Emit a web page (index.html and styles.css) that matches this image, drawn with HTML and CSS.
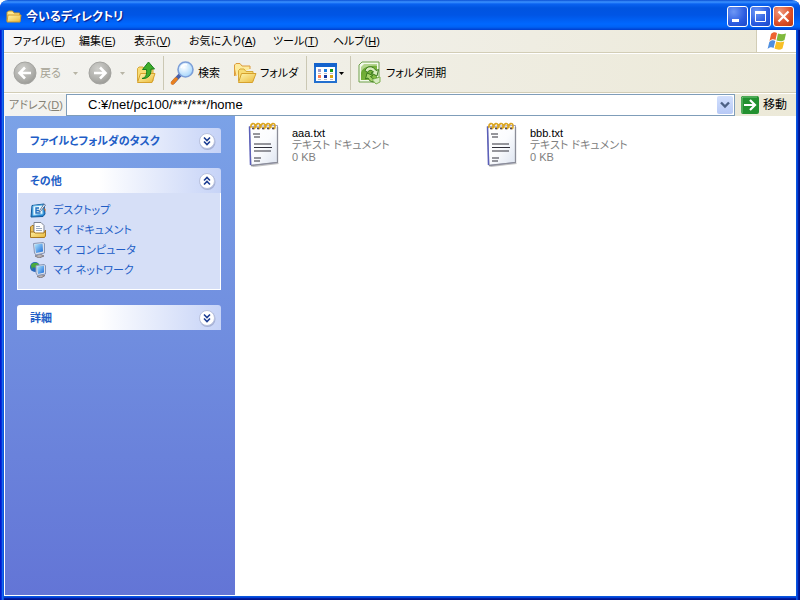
FILE: index.html
```html
<!DOCTYPE html>
<html lang="ja">
<head>
<meta charset="utf-8">
<title>今いるディレクトリ</title>
<link rel="stylesheet" href="styles.css">
</head>
<body>
<svg class="defs" width="0" height="0" aria-hidden="true">
  <defs>
    <linearGradient id="gold" x1="0" y1="0" x2="1" y2="1"><stop offset="0" stop-color="#fff6b0"/><stop offset="1" stop-color="#eab93a"/></linearGradient>
    <radialGradient id="gray" cx=".4" cy=".3" r=".8"><stop offset="0" stop-color="#cfcfcb"/><stop offset=".6" stop-color="#b0b0ac"/><stop offset="1" stop-color="#94948f"/></radialGradient>
    <radialGradient id="lens" cx=".4" cy=".35" r=".7"><stop offset="0" stop-color="#ffffff"/><stop offset="1" stop-color="#9fd3fb"/></radialGradient>
    <linearGradient id="paper" x1="0" y1="0" x2="1" y2="1"><stop offset="0" stop-color="#ffffff"/><stop offset=".5" stop-color="#fbfcfe"/><stop offset="1" stop-color="#dde4f0"/></linearGradient>
    <linearGradient id="screen" x1="0" y1="0" x2="1" y2="1"><stop offset="0" stop-color="#b9ecff"/><stop offset="1" stop-color="#1668d8"/></linearGradient>
    <linearGradient id="leaf" x1="0" y1="0" x2="1" y2="1"><stop offset="0" stop-color="#5e9f2a"/><stop offset="1" stop-color="#8fc34c"/></linearGradient>
    <symbol id="disc" viewBox="0 0 18 18">
      <circle cx="9.500" cy="10" r="8" fill="#8791b8" opacity=".55"/>
      <circle cx="9" cy="9" r="7.500" fill="#fff" stroke="#b9c2de"/>
    </symbol>
    <symbol id="expand" viewBox="0 0 18 18">
      <use href="#disc"/>
      <path d="M6 5.500l3 3 3-3M6 9.500l3 3 3-3" fill="none" stroke="#1c3d92" stroke-width="1.600"/>
    </symbol>
    <symbol id="collapse" viewBox="0 0 18 18">
      <use href="#disc"/>
      <path d="M6 8.500l3-3 3 3M6 12.500l3-3 3 3" fill="none" stroke="#1c3d92" stroke-width="1.600"/>
    </symbol>
    <symbol id="notepad" viewBox="0 0 32 46">
      <path d="M3 44l27-3 1 1-26 3z" fill="#9a9a9a" opacity=".6"/>
      <path d="M1.500 4.500L29.500 3.500v37L3 43.500z" fill="url(#paper)" stroke="#9a9cc0"/>
      <path d="M1.500 4.500L2.500 43" stroke="#5b5fb8" stroke-width="1.500"/>
      <path d="M29.500 5v35.500L3 43.500" stroke="#8b8d98" fill="none" stroke-width="1.300"/>
      <path d="M5 12h7M6 15h6M6 22h17M6 25.500h18M6 29h17M6 36h7M6 39h6" stroke="#30303a" stroke-width="1.200"/>
      <path d="M3 6c-1-5 4-6 4-2s-2 3-2 1M8 6c-1-5 4-6 4-2s-2 3-2 1M13 6c-1-5 4-6 4-2s-2 3-2 1M18 6c-1-5 4-6 4-2s-2 3-2 1M23 6c-1-5 4-6 4-2s-2 3-2 1" fill="none" stroke="#dba520" stroke-width="1.600"/>
      <path d="M4 6.500h2M9 6.500h2M14 6.500h2M19 6.500h2M24 6.500h2" stroke="#504a62" stroke-width="1.500"/>
    </symbol>
  </defs>
</svg>
<div class="window">
  <header class="titlebar">
    <svg class="title-icon" width="16" height="16" viewBox="0 0 16 16"><path d="M1 12V3.500l1.500-1.500h4l1.500 2h5.500v3" fill="#ffe98e" stroke="#c89a2c"/><path d="M1 13l1-7h13l-1 7z" fill="url(#gold)" stroke="#d0992a"/></svg>
    <h1 class="title">今いるディレクトリ</h1>
    <div class="controls">
      <button class="control" type="button" aria-label="最小化"><svg width="19" height="19" viewBox="0 0 19 19"><path d="M4 12h7v3H4z" fill="#fff"/></svg></button>
      <button class="control" type="button" aria-label="最大化"><svg width="19" height="19" viewBox="0 0 19 19"><path d="M4.500 4.500h10v10h-10z" fill="none" stroke="#fff"/><path d="M4 4h11v3H4z" fill="#fff"/></svg></button>
      <button class="control close" type="button" aria-label="閉じる"><svg width="19" height="19" viewBox="0 0 19 19"><path d="M4.500 4.500l10 10M14.500 4.500l-10 10" stroke="#fff" stroke-width="2.200"/></svg></button>
    </div>
  </header>
  <div class="menubar">
    <nav class="menu">
      <button type="button">ファイル(<u>F</u>)</button>
      <button type="button">編集(<u>E</u>)</button>
      <button type="button">表示(<u>V</u>)</button>
      <button type="button">お気に入り(<u>A</u>)</button>
      <button type="button">ツール(<u>T</u>)</button>
      <button type="button">ヘルプ(<u>H</u>)</button>
    </nav>
    <div class="flag">
      <svg width="20" height="20" viewBox="0 0 20 20"><path d="M4 3c2-2 4-2 6-1L8.500 9c-2-1-4-1-6 1z" fill="#ee6331"/><path d="M11 2.500c3 1 5 1 8 0L17.500 9c-3 2-5 1-8 .5z" fill="#7fb93d"/><path d="M2.300 11c2-2 4-2 6-1l-1.700 7c-2-1-4-1-6 1z" fill="#4f8fe0"/><path d="M9.300 10.500c3 1 5 1 8 0l-1.800 7c-3 2-5 1-8 0z" fill="#f8bf26"/></svg>
    </div>
  </div>
  <div class="toolbar">
    <button class="tool back" type="button" disabled>
      <svg width="24" height="24" viewBox="0 0 24 24"><circle cx="12" cy="12" r="11" fill="url(#gray)" stroke="#a4a4a0"/><path d="M18 12H7M12 6.500L6.500 12l5.500 5.500" fill="none" stroke="#fff" stroke-width="2.600"/></svg>
      <span>戻る</span>
      <svg class="drop" width="5" height="3" viewBox="0 0 5 3"><path d="M0 0h5L2.500 3z" fill="#b8b5a6"/></svg>
    </button>
    <button class="tool forward" type="button" disabled aria-label="進む">
      <svg width="24" height="24" viewBox="0 0 24 24"><circle cx="12" cy="12" r="11" fill="url(#gray)" stroke="#a4a4a0"/><path d="M6 12h11M12 6.500l5.500 5.500-5.500 5.500" fill="none" stroke="#fff" stroke-width="2.600"/></svg>
      <svg class="drop" width="5" height="3" viewBox="0 0 5 3"><path d="M0 0h5L2.500 3z" fill="#b8b5a6"/></svg>
    </button>
    <button class="tool up" type="button" aria-label="上へ">
      <svg width="20" height="24" viewBox="0 0 20 24"><path d="M1.500 20V7.500L3 6h4l2 2.500h8V20z" fill="#f8dc74" stroke="#d6a93a"/><path d="M1.500 21.500l3-9H19l-3 9z" fill="url(#gold)" stroke="#d6a12c"/><path d="M6 17.500c4-1 5-4 4.500-9H6.500L12.500 1l6 7H15c.5 6-3 10-9 9.500z" fill="#3fae2b" stroke="#197f1d"/></svg>
    </button>
    <button class="tool search" type="button">
      <svg width="24" height="24" viewBox="0 0 24 24"><path d="M10 14l-7 7.500" stroke="#4a5fa8" stroke-width="4" stroke-linecap="round"/><path d="M6 18l-3.500 4" stroke="#e8801f" stroke-width="3.500" stroke-linecap="round"/><circle cx="15.500" cy="8.500" r="7.500" fill="url(#lens)" stroke="#7d9fd8" stroke-width="1.600"/><path d="M11 7c1-3 4-4 6-3" fill="none" stroke="#fff" stroke-width="1.500"/></svg>
      <span>検索</span>
    </button>
    <button class="tool folders" type="button">
      <svg width="24" height="24" viewBox="0 0 24 24"><path d="M1.500 15V4L3 2.500h4l2 2.500h8v3" fill="#fdeb9d" stroke="#dc9b3c"/><path d="M3 15L1.500 8" stroke="#e0a03c"/><path d="M5.500 20V9.500L7 8h4l2 2.500h7V20z" fill="#f8dc74" stroke="#d6a93a"/><path d="M5.500 21.500l3-9H23l-3.500 9z" fill="url(#gold)" stroke="#d6a12c"/></svg>
      <span>フォルダ</span>
    </button>
    <button class="tool views" type="button" aria-label="表示">
      <svg width="23" height="20" viewBox="0 0 23 20"><path d="M1 1h21v18H1z" fill="#fff" stroke="#2370cf" stroke-width="2"/><path d="M0 0h23v4H0z" fill="#1463cd"/><path d="M4 6h3v3H4z" fill="#9b98c8"/><path d="M10 6h3v3h-3z" fill="#1d7fe0"/><path d="M16 6h3v3h-3z" fill="#159719"/><path d="M4 12h3v3H4z" fill="#ff7b4c"/><path d="M10 12h3v3h-3z" fill="#12349c"/><path d="M16 12h3v3h-3z" fill="#d9a313"/><path d="M4 10.500h3m3 0h3m3 0h3M4 16.500h3m3 0h3m3 0h3" stroke="#b7bac2"/></svg>
      <svg class="drop" width="5" height="3" viewBox="0 0 5 3"><path d="M0 0h5L2.500 3z" fill="#000"/></svg>
    </button>
    <button class="tool sync" type="button">
      <svg width="24" height="24" viewBox="0 0 24 24"><path d="M1 4L4 1h17v20H1z" fill="#f4faec" stroke="#6fa04a"/><path d="M3 6l3-3h13v16H3z" fill="#b4d58e"/><path d="M3 19V12C4 7 10 4 19 5v14z" fill="url(#leaf)"/><path d="M7 9.500c2-5 8-5 11 0l2.500-1L19 15l-6-3 2.500-1c-2-2.500-5-2-6 .5z" fill="#d9edbd" stroke="#39791c"/><path d="M21 18c-3 4-9 4-11-1l-2.500 1L9 12l6 2.500-2.500 1c2 3 5 2.500 6 1z" fill="#a6d36b" stroke="#39791c"/><path d="M14 18.500l8-2.500v5l-4 2z" fill="#d8ecc3" stroke="#7eb251"/></svg>
      <span>フォルダ同期</span>
    </button>
  </div>
  <form class="address">
    <label class="address-label" for="path">アドレス(<u>D</u>)</label>
    <div class="combo">
      <input id="path" type="text" value="C:¥/net/pc100/***/***/home">
      <button class="combo-drop" type="button" aria-label="履歴"><svg width="10" height="8" viewBox="0 0 10 8"><path d="M1 1.500l4 4 4-4" fill="none" stroke="#4d6185" stroke-width="2.400"/></svg></button>
    </div>
    <button class="go" type="button">
      <svg width="18" height="18" viewBox="0 0 18 18"><rect width="18" height="18" rx="2" fill="#239130"/><path d="M1 17V2l1-1h14" fill="none" stroke="#76c47c"/><path d="M3 9h10M9 4l5 5-5 5" fill="none" stroke="#fff" stroke-width="2.200"/></svg>
      <span>移動</span>
    </button>
  </form>
  <div class="body">
    <aside class="sidebar">
      <section class="panel">
        <h2 class="panel-head">ファイルとフォルダのタスク<button type="button" aria-label="展開"><svg width="18" height="18"><use href="#expand"/></svg></button></h2>
      </section>
      <section class="panel">
        <h2 class="panel-head">その他<button type="button" aria-label="折りたたむ"><svg width="18" height="18"><use href="#collapse"/></svg></button></h2>
        <ul class="places">
          <li><a href="#"><svg width="16" height="16" viewBox="0 0 16 16"><path d="M2 3.500L14 2l1 10-2 2.500L1 15z" fill="#2583d2" stroke="#135b9b"/><path d="M3 4l9.500-1 .5 9L3 13.500z" fill="#e8f8ff" stroke="#62b5e6"/><path d="M9 6H6v5h4.500M6 8.500h3" fill="none" stroke="#226fc0" stroke-width="1.400"/><path d="M9 9.500L14 2l1.500 1-5 6.500z" fill="#fff" stroke="#43618e" stroke-width=".8"/><path d="M13.500 6l2 1v3z" fill="#de7225"/></svg>デスクトップ</a></li>
          <li><a href="#"><svg width="16" height="16" viewBox="0 0 16 16"><path d="M.5 14.500V5L2 3.500h2v11z" fill="#eac05a" stroke="#a97921"/><path d="M4 .5h7l3 3V12H4z" fill="#fff" stroke="#7e8494"/><path d="M6 4.500h4M6 6.500h6M6 8.500h6" stroke="#9aaac2"/><path d="M.5 15.500V10h3.500l1 1h9l1.500-3v6l-1 1.500z" fill="url(#gold)" stroke="#a97921"/></svg>マイ ドキュメント</a></li>
          <li><a href="#"><svg width="16" height="16" viewBox="0 0 16 16"><path d="M5 14l5-2 4 2-5 2z" fill="#b9b4b4" stroke="#827d82"/><path d="M3.500 1.500L13 .5l1.500 1V11L6 13l-1.500-2z" fill="#dbe0ea" stroke="#8795b5"/><path d="M4.500 2.500l8-1 .5 8L6 11z" fill="url(#screen)"/></svg>マイ コンピュータ</a></li>
          <li><a href="#"><svg width="16" height="16" viewBox="0 0 16 16"><circle cx="5" cy="5" r="5" fill="#2868bc"/><path d="M1 3c2-3 7-3 8 0L5 6 3 5 2 8z" fill="#4aab3c"/><path d="M7 14.500l4-2 4 1-4 2.500z" fill="#b9b4b4" stroke="#827d82"/><path d="M6 3.500l8-1 1.500 1V12l-8 1.500L6 11z" fill="#dbe0ea" stroke="#8795b5"/><path d="M7 4.500l7-1v7L8 12z" fill="url(#screen)"/></svg>マイ ネットワーク</a></li>
        </ul>
      </section>
      <section class="panel">
        <h2 class="panel-head">詳細<button type="button" aria-label="展開"><svg width="18" height="18"><use href="#expand"/></svg></button></h2>
      </section>
    </aside>
    <main class="content">
      <ul class="files">
        <li class="file">
          <svg width="32" height="46"><use href="#notepad"/></svg>
          <div class="meta"><p class="name">aaa.txt</p><p>テキスト ドキュメント</p><p>0 KB</p></div>
        </li>
        <li class="file">
          <svg width="32" height="46"><use href="#notepad"/></svg>
          <div class="meta"><p class="name">bbb.txt</p><p>テキスト ドキュメント</p><p>0 KB</p></div>
        </li>
      </ul>
    </main>
  </div>
</div>
</body>
</html>
```
FILE: styles.css
```css
* { box-sizing: border-box; }
body {
  margin: 0;
  background: #fff;
  color: #000;
  font: 11px/12px "Liberation Sans", "Noto Sans CJK JP", sans-serif;
  font-feature-settings: "palt";
}
h1, h2, p, ul { margin: 0; padding: 0; font-size: inherit; }
ul { list-style: none; }
button, input { font: inherit; font-feature-settings: inherit; color: inherit; }
button { background: none; border: 0; padding: 0; white-space: nowrap; }
svg { display: block; flex: none; }
.defs { position: absolute; }

.window {
  display: flex;
  flex-direction: column;
  min-height: 100vh;
  padding: 0 4px 4px;
  border-radius: 8px 8px 0 0;
  overflow: hidden;
  background:
    linear-gradient(90deg, #0019cf 1px, #0831d9 1px 2px, #166aee 2px 3px, #0855dd 3px) left / 4px 100% no-repeat,
    linear-gradient(270deg, #00138c 1px, #001ea0 1px 2px, #0441d8 2px 3px, #0855dd 3px) right / 4px 100% no-repeat,
    linear-gradient(0deg, #00138c 1px, #001ea0 1px 2px, #0441d8 2px 3px, #0855dd 3px) bottom / 100% 4px no-repeat;
}
.titlebar {
  display: flex;
  align-items: center;
  height: 30px;
  margin: 0 -4px;
  padding: 3px 6px 0 6px;
  background: linear-gradient(#0a4fd4 0, #3c93ff 2px, #0a62f0 4px, #0054e0 8px, #0055e5 15px, #0068ff 24px, #0062f5 27px, #003dcc 30px);
}
.title {
  margin-left: 4px;
  color: #fff;
  font-size: 12px;
  font-weight: bold;
  line-height: 16px;
  text-shadow: 1px 1px 1px #0a1883;
}
.controls { display: flex; gap: 2px; margin-left: auto; }
.control {
  width: 21px;
  height: 21px;
  border: 1px solid #fff;
  border-radius: 3px;
  background: radial-gradient(circle at 30% 25%, #6d97f5, #2a5be0 60%, #1c48c8);
}
.close { background: radial-gradient(circle at 30% 25%, #f09a7e, #dc4d26 60%, #b83a12); }

.menubar {
  display: flex;
  height: 24px;
  background: linear-gradient(90deg, #f5f5f6, #ece9d8);
  border-bottom: 1px solid #fff;
}
.menu {
  flex: 1;
  display: grid;
  grid-template-columns: 66px 55px 55px 84px 60px auto;
  justify-content: start;
  justify-items: start;
  padding: 0 9px;
  border-bottom: 1px solid #d2cdb6;
}
.flag {
  display: grid;
  place-items: center;
  width: 40px;
  background: #fff;
  border: solid #d2cdb6;
  border-width: 0 0 1px 1px;
}
.toolbar {
  display: flex;
  align-items: center;
  height: 39px;
  padding-left: 9px;
  background: linear-gradient(90deg, #f3f3f0, #ece9d8);
  border-bottom: 1px solid #d2cdb6;
}
.tool { display: flex; align-items: center; gap: 4px; height: 34px; }
.tool:disabled { color: #a5a294; }
.back { width: 75px; gap: 3px; }
.back .drop { margin-left: auto; margin-right: 10px; }
.forward { width: 48px; gap: 8px; }
.up { width: 28px; border-right: 1px solid #cbc8b4; }
.search { width: 69px; padding-left: 6px; }
.folders { width: 74px; gap: 3px; border-right: 1px solid #cbc8b4; }
.views { width: 44px; gap: 2px; padding-left: 7px; border-right: 1px solid #cbc8b4; }
.sync { padding-left: 7px; }

.address {
  display: flex;
  align-items: center;
  height: 23px;
  padding-right: 9px;
  background: linear-gradient(90deg, #f3f3f0, #ece9d8);
  border-top: 1px solid #fff;
}
.address-label { width: 62px; padding-left: 5px; color: #858275; white-space: nowrap; }
.combo {
  flex: 1;
  display: flex;
  align-items: center;
  height: 22px;
  padding-right: 1px;
  background: #fff;
  border: 1px solid #7f9db9;
}
.combo input { flex: 1; min-width: 0; border: 0; padding: 0 0 0 21px; outline: 0; background: none; font-size: 13px; line-height: 16px; }
.combo-drop {
  display: grid;
  place-items: center;
  width: 16px;
  height: 18px;
  border-radius: 2px;
  background: linear-gradient(#d3e0fd, #b7c9f6);
}
.go { display: flex; align-items: center; gap: 4px; margin-left: 6px; font-size: 12px; }

.body {
  flex: 1;
  display: flex;
  background: #fff;
  padding: 0 0 1px 1px;
}
.sidebar {
  display: flex;
  flex-direction: column;
  gap: 15px;
  width: 230px;
  padding: 12px 14px 12px 12px;
  background: linear-gradient(#7ba2e7, #6375d6);
}
.panel-head {
  display: flex;
  align-items: center;
  justify-content: space-between;
  height: 25px;
  padding: 0 5px 0 13px;
  border-radius: 3px 3px 0 0;
  background: linear-gradient(90deg, #fff 40%, #c6d3f7);
  color: #215dc6;
}
.places {
  display: grid;
  gap: 4px;
  padding: 9px 12px 11px;
  background: #d6dff7;
  border: 1px solid #fff;
  border-top: 0;
}
.places a {
  display: flex;
  align-items: center;
  gap: 7px;
  height: 16px;
  color: #215dc6;
  text-decoration: none;
}
.content { flex: 1; min-width: 0; padding: 6px 13px; }
.files { display: grid; grid-template-columns: repeat(auto-fill, 238px); }
.file { display: flex; gap: 12px; }
.meta { padding-top: 5px; color: #808080; }
.name { color: #000; }
```
